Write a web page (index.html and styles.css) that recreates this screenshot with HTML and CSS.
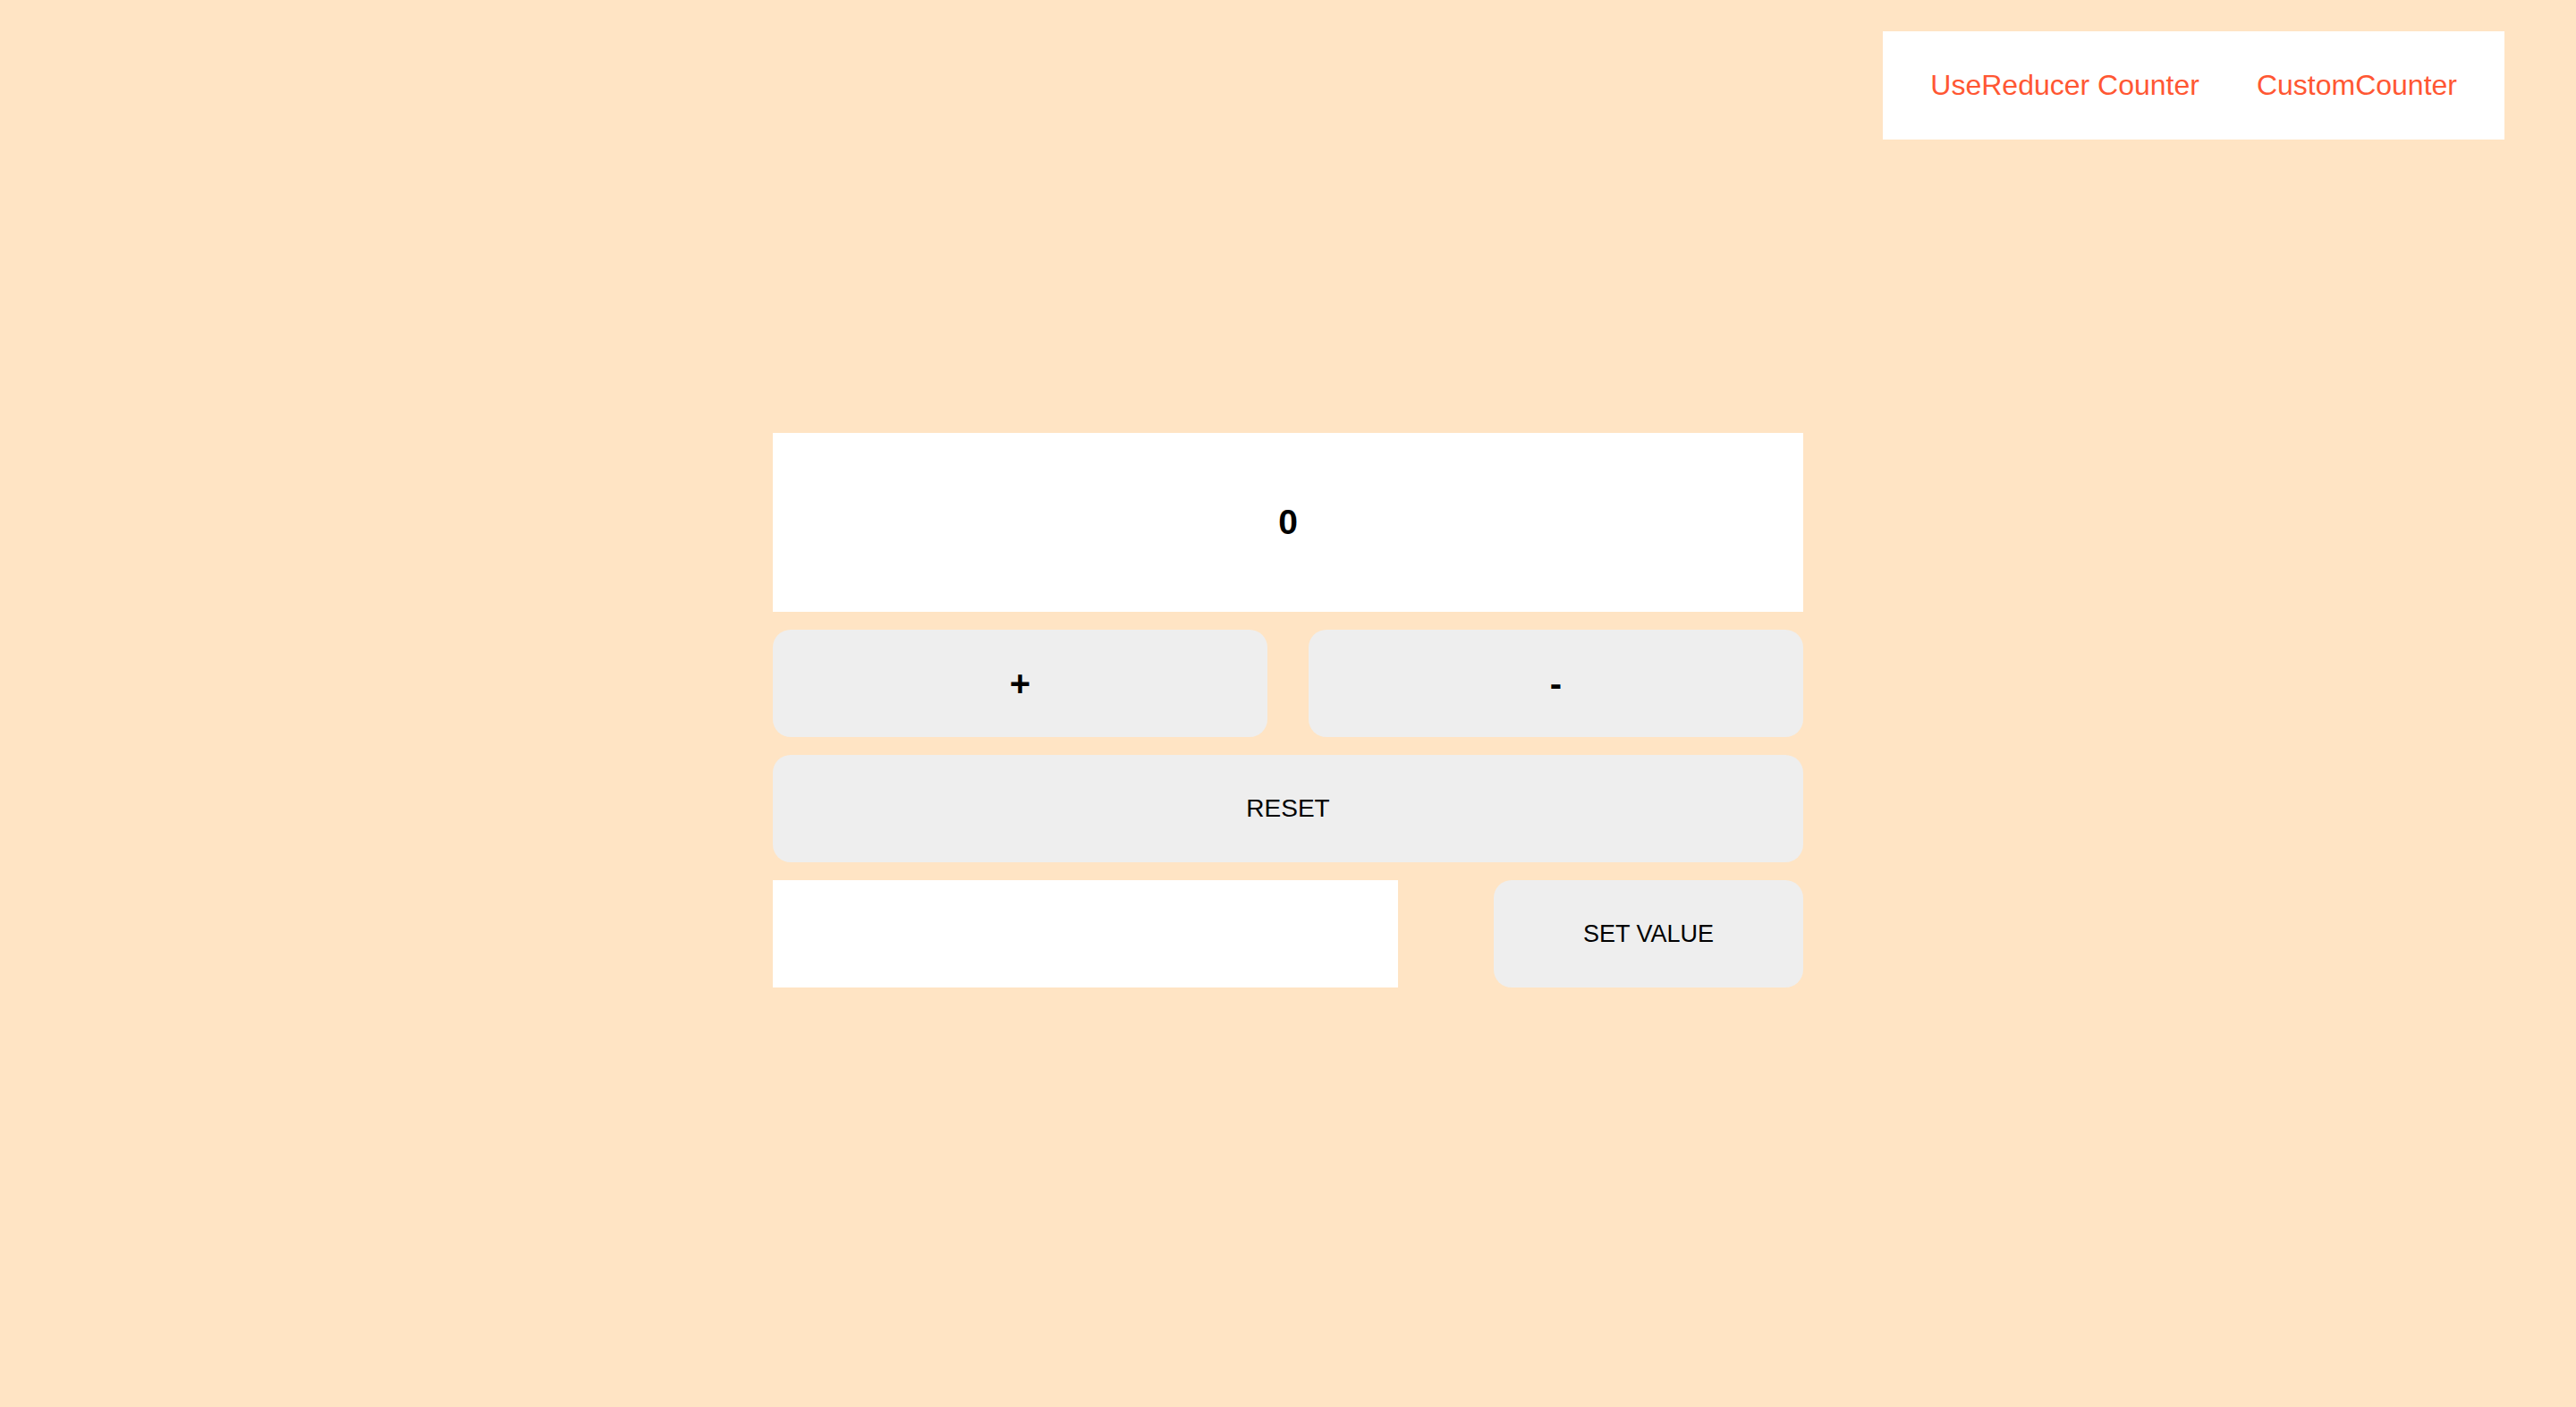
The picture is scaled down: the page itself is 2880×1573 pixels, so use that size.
FILE: index.html
```html
<!DOCTYPE html>
<html lang="en">
<head>
<meta charset="utf-8">
<title>Counter</title>
<link rel="stylesheet" href="styles.css">
</head>
<body>
<header class="top">
  <nav class="nav">
    <a class="nav-link" href="#">UseReducer Counter</a>
    <a class="nav-link" href="#">CustomCounter</a>
  </nav>
</header>
<main class="counter">
  <div class="display">0</div>
  <div class="row">
    <button class="btn btn-half btn-sign">+</button>
    <button class="btn btn-half btn-sign">-</button>
  </div>
  <button class="btn btn-full btn-reset">RESET</button>
  <div class="row">
    <input class="value-input" type="text">
    <button class="btn btn-set">SET VALUE</button>
  </div>
</main>
</body>
</html>
```

FILE: styles.css
```css
html, body {
  margin: 0;
  padding: 0;
}
body {
  background: #ffe4c4;
  font-family: "Liberation Sans", Arial, sans-serif;
}
.top {
  display: flex;
  justify-content: flex-end;
  padding: 35px 80px 0 0;
}
.nav {
  display: flex;
  align-items: center;
  height: 121px;
  padding: 0 21px;
  background: #ffffff;
}
.nav-link {
  padding: 0 32px;
  font-size: 32px;
  color: #ff5733;
  text-decoration: none;
}
.counter {
  width: 1152px;
  margin: 328px auto 0;
  display: flex;
  flex-direction: column;
  gap: 20px;
}
.display {
  height: 200px;
  background: #ffffff;
  display: flex;
  align-items: center;
  justify-content: center;
  font-size: 39px;
  font-weight: bold;
  color: #000;
}
.row {
  display: flex;
  justify-content: space-between;
  height: 120px;
}
.btn {
  border: none;
  background: #eeeeee;
  border-radius: 20px;
  height: 120px;
  color: #000;
  font-family: "Liberation Sans", Arial, sans-serif;
  padding: 0;
}
.btn-half {
  width: 553px;
}
.btn-sign {
  font-size: 40px;
  font-weight: bold;
}
.btn-full {
  width: 100%;
}
.btn-reset {
  font-size: 28px;
}
.btn-set {
  width: 346px;
  font-size: 27px;
}
.value-input {
  width: 699px;
  height: 120px;
  box-sizing: border-box;
  border: none;
  background: #ffffff;
  padding: 0 8px;
  font-size: 26px;
  outline: none;
}
```
